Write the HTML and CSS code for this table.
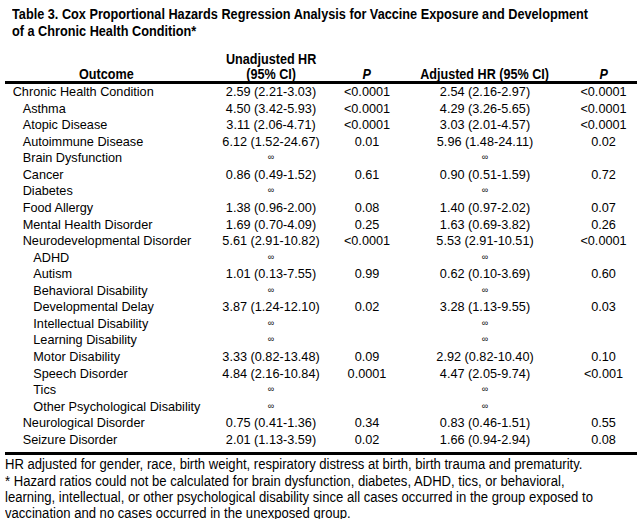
FILE: index.html
```html
<!DOCTYPE html>
<html>
<head>
<meta charset="utf-8">
<link rel="stylesheet" href="styles.css">
</head>
<body>
<div class="page">
  <h1 class="title"><span class="narrow">Table 3. Cox Proportional Hazards Regression Analysis for Vaccine Exposure and Development<br>of a Chronic Health Condition*</span></h1>
  <table class="tbl">
    <colgroup>
      <col class="c1"><col class="c2"><col class="c3"><col class="c4"><col class="c5">
    </colgroup>
    <thead>
      <tr>
        <th><span class="hn">Outcome</span></th>
        <th><span class="hn">Unadjusted HR<br>(95% CI)</span></th>
        <th><span class="hn"><i>P</i></span></th>
        <th><span class="hn">Adjusted HR (95% CI)</span></th>
        <th><span class="hn"><i>P</i></span></th>
      </tr>
    </thead>
    <tbody>
      <tr><td class="l0">Chronic Health Condition</td><td>2.59 (2.21-3.03)</td><td>&lt;0.0001</td><td>2.54 (2.16-2.97)</td><td>&lt;0.0001</td></tr>
      <tr><td class="l1">Asthma</td><td>4.50 (3.42-5.93)</td><td>&lt;0.0001</td><td>4.29 (3.26-5.65)</td><td>&lt;0.0001</td></tr>
      <tr><td class="l1">Atopic Disease</td><td>3.11 (2.06-4.71)</td><td>&lt;0.0001</td><td>3.03 (2.01-4.57)</td><td>&lt;0.0001</td></tr>
      <tr><td class="l1">Autoimmune Disease</td><td>6.12 (1.52-24.67)</td><td>0.01</td><td>5.96 (1.48-24.11)</td><td>0.02</td></tr>
      <tr><td class="l1">Brain Dysfunction</td><td><span class="inf">∞</span></td><td></td><td><span class="inf">∞</span></td><td></td></tr>
      <tr><td class="l1">Cancer</td><td>0.86 (0.49-1.52)</td><td>0.61</td><td>0.90 (0.51-1.59)</td><td>0.72</td></tr>
      <tr><td class="l1">Diabetes</td><td><span class="inf">∞</span></td><td></td><td><span class="inf">∞</span></td><td></td></tr>
      <tr><td class="l1">Food Allergy</td><td>1.38 (0.96-2.00)</td><td>0.08</td><td>1.40 (0.97-2.02)</td><td>0.07</td></tr>
      <tr><td class="l1">Mental Health Disorder</td><td>1.69 (0.70-4.09)</td><td>0.25</td><td>1.63 (0.69-3.82)</td><td>0.26</td></tr>
      <tr><td class="l1">Neurodevelopmental Disorder</td><td>5.61 (2.91-10.82)</td><td>&lt;0.0001</td><td>5.53 (2.91-10.51)</td><td>&lt;0.0001</td></tr>
      <tr><td class="l2">ADHD</td><td><span class="inf">∞</span></td><td></td><td><span class="inf">∞</span></td><td></td></tr>
      <tr><td class="l2">Autism</td><td>1.01 (0.13-7.55)</td><td>0.99</td><td>0.62 (0.10-3.69)</td><td>0.60</td></tr>
      <tr><td class="l2">Behavioral Disability</td><td><span class="inf">∞</span></td><td></td><td><span class="inf">∞</span></td><td></td></tr>
      <tr><td class="l2">Developmental Delay</td><td>3.87 (1.24-12.10)</td><td>0.02</td><td>3.28 (1.13-9.55)</td><td>0.03</td></tr>
      <tr><td class="l2">Intellectual Disability</td><td><span class="inf">∞</span></td><td></td><td><span class="inf">∞</span></td><td></td></tr>
      <tr><td class="l2">Learning Disability</td><td><span class="inf">∞</span></td><td></td><td><span class="inf">∞</span></td><td></td></tr>
      <tr><td class="l2">Motor Disability</td><td>3.33 (0.82-13.48)</td><td>0.09</td><td>2.92 (0.82-10.40)</td><td>0.10</td></tr>
      <tr><td class="l2">Speech Disorder</td><td>4.84 (2.16-10.84)</td><td>0.0001</td><td>4.47 (2.05-9.74)</td><td>&lt;0.001</td></tr>
      <tr><td class="l2">Tics</td><td><span class="inf">∞</span></td><td></td><td><span class="inf">∞</span></td><td></td></tr>
      <tr><td class="l2">Other Psychological Disability</td><td><span class="inf">∞</span></td><td></td><td><span class="inf">∞</span></td><td></td></tr>
      <tr><td class="l1">Neurological Disorder</td><td>0.75 (0.41-1.36)</td><td>0.34</td><td>0.83 (0.46-1.51)</td><td>0.55</td></tr>
      <tr class="last"><td class="l1">Seizure Disorder</td><td>2.01 (1.13-3.59)</td><td>0.02</td><td>1.66 (0.94-2.94)</td><td>0.08</td></tr>
    </tbody>
  </table>
  <div class="notes"><span class="narrow">HR adjusted for gender, race, birth weight, respiratory distress at birth, birth trauma and prematurity.<br>* Hazard ratios could not be calculated for brain dysfunction, diabetes, ADHD, tics, or behavioral,<br>learning, intellectual, or other psychological disability since all cases occurred in the group exposed to<br>vaccination and no cases occurred in the unexposed group.</span></div>
</div>
</body>
</html>
```

FILE: styles.css
```css
html, body {
  margin: 0;
  padding: 0;
  background: #ffffff;
  color: #000000;
}
.page {
  width: 632px;
  padding: 6px 5px 0 5px;
}
.narrow {
  display: inline-block;
  white-space: nowrap;
  transform-origin: left top;
}
.title {
  margin: 0 0 0 7px;
  font-family: "Liberation Sans", Arial, sans-serif;
  font-weight: bold;
  font-size: 14.5px;
  line-height: 17px;
}
.title .narrow {
  transform: scaleX(0.876);
}
.tbl {
  margin-top: 11px;
  width: 632px;
  border-collapse: collapse;
  table-layout: fixed;
  font-family: "Liberation Sans", Arial, sans-serif;
  font-size: 12.7px;
}
.c1 { width: 203px; }
.c2 { width: 126px; }
.c3 { width: 66px; }
.c4 { width: 170px; }
.c5 { width: 67px; }
.tbl th {
  font-weight: bold;
  font-size: 14px;
  line-height: 15px;
  text-align: center;
  vertical-align: bottom;
  padding: 0;
  border-bottom: 3px solid #000;
}
.hn {
  display: inline-block;
  white-space: nowrap;
  transform: translateY(1px) scaleX(0.9);
  transform-origin: center bottom;
}
.tbl td {
  padding: 0;
  line-height: 16.57px;
  text-align: center;
  white-space: nowrap;
}
.tbl tr.last td {
  padding-bottom: 4px;
  border-bottom: 3px solid #000;
}
.tbl td.l0 { text-align: left; padding-left: 7.7px; }
.tbl td.l1 { text-align: left; padding-left: 17.7px; }
.tbl td.l2 { text-align: left; padding-left: 28.3px; }
.inf {
  font-size: 9px;
  line-height: 0;
  position: relative;
  top: -2px;
}
.notes {
  font-family: "Liberation Sans", Arial, sans-serif;
  font-size: 14px;
  line-height: 16.3px;
  padding-top: 1px;
}
.notes .narrow {
  transform: scaleX(0.935);
}
```
